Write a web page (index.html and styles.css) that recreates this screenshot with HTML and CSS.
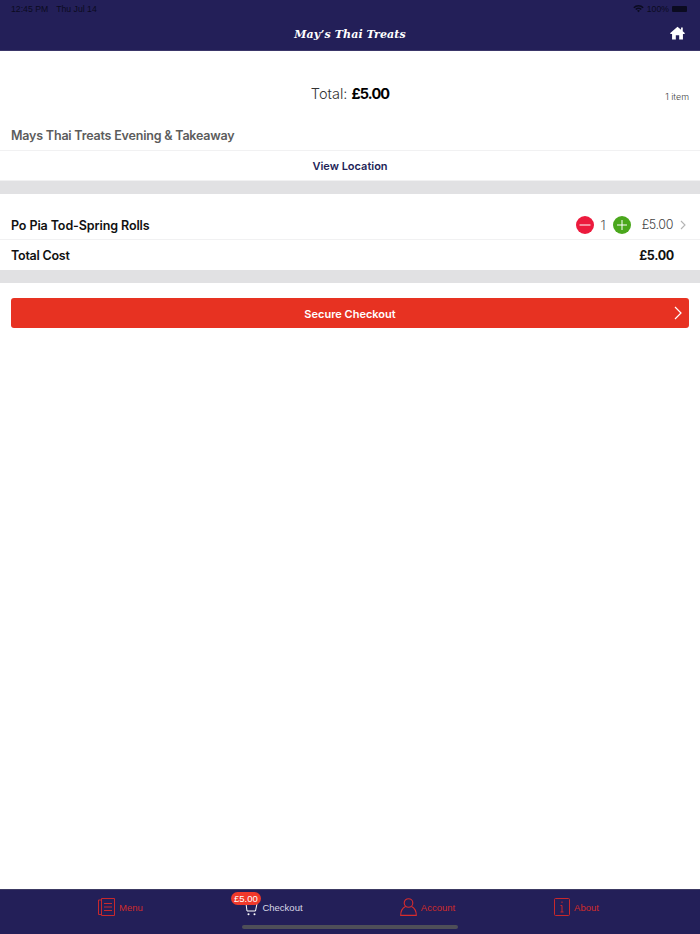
FILE: index.html
```html
<!DOCTYPE html>
<html lang="en">
<head>
<meta charset="utf-8">
<title>Checkout</title>
<link rel="stylesheet" href="styles.css">
</head>
<body>
<div class="app">
  <header class="header">
    <div class="status">
      <div class="status-left"><span>12:45 PM</span><span>Thu Jul 14</span></div>
      <div class="status-right">
        <svg class="wifi" viewBox="0 0 12 9" width="11" height="9"><path d="M.3 3A8 8 0 0 1 11.7 3L10.5 4.2A6.3 6.3 0 0 0 1.500 4.200Z M2.400 5A5 5 0 0 1 9.600 5L8.400 6.200A3.300 3.300 0 0 0 3.600 6.200Z M4.400 7A2.200 2.200 0 0 1 7.600 7L6 8.700Z" fill="#0b0b20"/></svg>
        <span>100%</span>
        <span class="battery"></span>
      </div>
    </div>
    <div class="navbar">
      <div class="brand">May’s Thai Treats</div>
      <svg class="home" viewBox="0 0 16 14" width="15" height="14"><path d="M8 .3 11.800 3.600V1.200H13.600V5.200L16 7.300 15.200 8H13.800V14H9.800V9.300H6.200V14H2.200V8H.8L0 7.300Z" fill="#fff"/></svg>
    </div>
  </header>

  <main class="main">
    <section class="summary">
      <div class="total">Total: <strong>£5.00</strong></div>
      <div class="count">1 item</div>
    </section>
    <div class="row venue">Mays Thai Treats Evening &amp; Takeaway</div>
    <div class="row location">View Location</div>
    <div class="band"></div>
    <div class="item-row">
      <div class="item-name">Po Pia Tod-Spring Rolls</div>
      <div class="item-controls">
        <span class="qty-btn minus"><svg viewBox="0 0 18 18" width="18" height="18"><path d="M3.500 9H14.500" stroke="#fff" stroke-width="1"/></svg></span>
        <span class="qty">1</span>
        <span class="qty-btn plus"><svg viewBox="0 0 18 18" width="18" height="18"><path d="M4 9H14M9 4V14" stroke="#fff" stroke-width="1"/></svg></span>
        <span class="price">£5.00</span>
        <svg class="chev" viewBox="0 0 6 10" width="6" height="10"><path d="M1 1 5 5 1 9" fill="none" stroke="#b4b4b4" stroke-width="1.100"/></svg>
      </div>
    </div>
    <div class="cost-row">
      <span>Total Cost</span>
      <span class="cost-value">£5.00</span>
    </div>
    <div class="band"></div>
    <div class="checkout-wrap">
      <button class="checkout" type="button">
        <span>Secure Checkout</span>
        <svg class="checkout-chev" viewBox="0 0 8 14" width="8" height="14"><path d="M1 1 7 7 1 13" fill="none" stroke="#fff" stroke-width="1.200"/></svg>
      </button>
    </div>
  </main>

  <nav class="tabbar">
    <div class="tabs">
      <div class="tab">
        <svg viewBox="0 0 17 18" width="17" height="18" fill="none" stroke="#c8282c" stroke-width="1"><path d="M3.500.5H16.500V17.500H3.500ZM3.500 2H.5V16.500H3.500M6 5.500H14M6 9H14M6 12.500H14"/></svg>
        <span>Menu</span>
      </div>
      <div class="tab active">
        <span class="badge">£5.00</span>
        <svg class="cart" viewBox="0 0 14 14" width="14" height="14" fill="none" stroke="#fff" stroke-width="1"><path d="M.5 1.500H13L11.500 9H3L2 1.500"/><circle cx="4.500" cy="12.300" r="1" fill="#fff" stroke="none"/><circle cx="10.500" cy="12.300" r="1" fill="#fff" stroke="none"/></svg>
        <span>Checkout</span>
      </div>
      <div class="tab">
        <svg viewBox="0 0 17 18" width="17" height="18" fill="none" stroke="#d82c2c" stroke-width="1.100"><circle cx="8.500" cy="5" r="4.300"/><path d="M5.500 8.500C2.500 10 .7 12.500.7 17.400H16.300C16.300 12.500 14.500 10 11.500 8.500"/></svg>
        <span>Account</span>
      </div>
      <div class="tab">
        <svg viewBox="0 0 16 18" width="16" height="18" fill="none" stroke="#c8282c" stroke-width="1"><rect x=".5" y=".5" width="15" height="17" rx="1"/><path d="M8 7.500V14M6.500 7.500H8M6.500 14H9.500M8 3.500V5"/></svg>
        <span>About</span>
      </div>
    </div>
    <div class="home-indicator"></div>
  </nav>
</div>
</body>
</html>
```

FILE: styles.css
```css
* { box-sizing: border-box; }
html, body { margin: 0; padding: 0; height: 100%; }
body { font-family: "Inter", "Liberation Sans", sans-serif; background: #fff; color: #000; }
.app { display: flex; flex-direction: column; height: 934px; width: 700px; overflow: hidden; }

.header { height: 51px; background: #231f58; border-bottom: 1px solid #3a3669; flex: none; }
.status { height: 16px; display: flex; justify-content: space-between; align-items: center; padding: 1px 13px 0 11px; font-size: 8.700px; color: #0b0b20; font-family: "Liberation Sans", sans-serif; }
.status-left { display: flex; gap: 8px; }
.status-right { display: flex; align-items: center; gap: 3px; }
.battery { display: block; width: 15px; height: 6px; background: #0b0b20; border-radius: 1px; }
.navbar { height: 34px; display: flex; align-items: center; justify-content: center; position: relative; }
.brand { font-family: "DejaVu Serif", serif; font-style: italic; font-weight: 700; font-size: 11px; letter-spacing: .1px; color: #fff; padding-top: 2px; }
.home { position: absolute; right: 15px; top: 10px; }

.main { flex: 1; display: flex; flex-direction: column; }
.summary { height: 69px; display: flex; align-items: center; justify-content: center; position: relative; }
.total { font-size: 14.500px; font-weight: 300; color: #333; padding-top: 16px; }
.total strong { font-weight: 700; color: #000; letter-spacing: -.9px; }
.count { position: absolute; right: 11px; top: 40px; font-size: 9px; font-weight: 300; color: #444; }

.row { height: 31px; display: flex; align-items: center; border-bottom: 1px solid #f1f1f2; }
.venue { padding: 0 11px; font-size: 12.500px; font-weight: 600; letter-spacing: -.2px; color: #5c5c5c; }
.location { justify-content: center; height: 30px; font-size: 11px; font-weight: 600; color: #231f58; }
.band { height: 13px; background: #e1e1e3; flex: none; }

.item-row { height: 46px; padding: 16px 11px 0; display: flex; align-items: center; justify-content: space-between; border-bottom: 1px solid #f1f1f2; }
.item-name { font-size: 12.500px; font-weight: 600; letter-spacing: -.1px; color: #111; padding-top: 1px; }
.item-controls { display: flex; align-items: center; }
.qty-btn { display: flex; width: 18px; height: 18px; border-radius: 50%; }
.minus { background: #ec1a3d; }
.plus { background: #4aa71c; }
.qty { width: 19px; text-align: center; font-size: 13px; font-weight: 300; color: #555; }
.price { margin-left: 11px; font-size: 12.500px; font-weight: 300; letter-spacing: -.4px; color: #444; }
.chev { margin-left: 7px; margin-right: 3px; }

.cost-row { height: 30px; padding: 0 26px 0 11px; display: flex; align-items: center; justify-content: space-between; font-size: 12.500px; font-weight: 600; letter-spacing: -.25px; color: #111; }
.cost-value { font-weight: 700; letter-spacing: -.3px; }

.checkout-wrap { padding: 15px 11px 0; }
.checkout { position: relative; width: 100%; height: 30px; padding: 1px 0 0; border: 0; border-radius: 3px; background: #e73222; color: #fff; font: 600 11px "Inter", "Liberation Sans", sans-serif; display: flex; align-items: center; justify-content: center; }
.checkout-chev { position: absolute; right: 7px; top: 8px; }

.tabbar { height: 45px; flex: none; background: #231f58; border-top: 1px solid #3c3a63; position: relative; }
.tabs { display: grid; grid-template-columns: 153px 153px 155px 143px; padding: 0 0 0 44px; height: 34px; }
.tab { display: flex; align-items: center; justify-content: center; gap: 4px; position: relative; font-family: "Liberation Sans", sans-serif; font-size: 9.500px; color: #cf2b2b; }
.tab.active { color: #d8d8e6; }
.cart { margin-top: 3px; }
.badge { position: absolute; left: 34px; top: 2px; height: 13px; line-height: 13px; padding: 0 3px; border-radius: 7px; background: #f0392b; color: #fff; font-size: 9.500px; font-weight: 400; }
.home-indicator { position: absolute; left: 242px; top: 35px; width: 216px; height: 4px; border-radius: 2px; background: #4e4e58; }
```
